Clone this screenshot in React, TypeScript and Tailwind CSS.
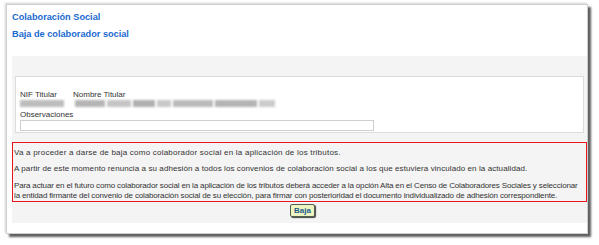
import React from "react";

function Blur({ w, c = "#bdbdbd" }: { w: number; c?: string }) {
  return <span className="inline-block h-[7px] blur-[0.8px]" style={{ width: w, background: c }} />;
}

export default function App() {
  return (
    <div className="w-[599px] h-[245px] bg-white pt-[4px] pl-[6px] overflow-hidden" style={{ fontFamily: '"Liberation Sans", Arial, sans-serif' }}>
      <div className="w-[582px] h-[230px] bg-white border border-[#cfcfcf] shadow-[3px_3px_2px_#5f5f5f,-1px_-1px_2px_#d0d0d0] flex flex-col">
        <div className="pl-[5px] pt-[7px] text-[9.2px] font-bold text-[#1a6ad0] leading-[11px]">Colaboración Social</div>
        <div className="pl-[5px] pt-[6px] text-[9.2px] font-bold text-[#1a6ad0] leading-[11px]">Baja de colaborador social</div>
        <div className="ml-[5px] mt-[16px] h-[167px] bg-[#f4f4f4] flex flex-col">
          <div className="mt-[20px] mx-[3px] h-[57px] bg-white border border-[#dcdcdc] pl-[4px] pt-[13px] text-[8px] text-[#333] leading-[9px]">
            <div className="flex">
              <div className="w-[53px]">NIF Titular</div>
              <div>Nombre Titular</div>
            </div>
            <div className="flex items-center h-[9px] gap-[11px]">
              <Blur w={44} />
              <div className="flex gap-[2px]">
                <Blur w={30} c="#b5b5b5" />
                <Blur w={24} c="#c5c5c5" />
                <Blur w={22} c="#b0b0b0" />
                <Blur w={14} c="#c8c8c8" />
                <Blur w={40} c="#bbbbbb" />
                <Blur w={42} c="#b4b4b4" />
                <Blur w={16} c="#cccccc" />
              </div>
            </div>
            <div className="mt-[2px]">Observaciones</div>
            <div className="w-[354px] h-[11px] border border-[#cfcfcf] bg-white mt-[1px]" />
          </div>
          <div className="mt-[9px] h-[60px] border-[1.5px] border-[#e8161c] pl-[1px] pt-[5px] text-[8px] text-[#333] leading-[9px] whitespace-nowrap">
            <p className="tracking-[0.22px]">Va a proceder a darse de baja como colaborador social en la aplicación de los tributos.</p>
            <p className="mt-[7px] tracking-[0.09px]">A partir de este momento renuncia a su adhesión a todos los convenios de colaboración social a los que estuviera vinculado en la actualidad.</p>
            <p className="mt-[8px] leading-[10px] tracking-[-0.15px]">
              Para actuar en el futuro como colaborador social en la aplicación de los tributos deberá acceder a la opción Alta en el Censo de Colaboradores Sociales y seleccionar
              <br />
              la entidad firmante del convenio de colaboración social de su elección, para firmar con posterioridad el documento individualizado de adhesión correspondiente.
            </p>
          </div>
          <div className="flex justify-center mt-[2px] pl-[6px]">
            <button className="h-[13px] px-[3px] bg-[#eef5c0] border border-[#4f5f50] rounded-[2px] shadow-[1px_1px_1px_#444] text-[8px] font-bold text-[#1f5d8a] leading-[10px]">Baja</button>
          </div>
        </div>
      </div>
    </div>
  );
}
